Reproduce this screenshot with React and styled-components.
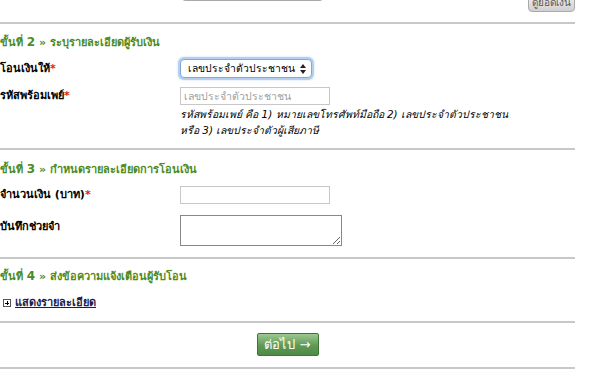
import React from "react";
import styled, { createGlobalStyle } from "styled-components";

const GlobalStyle = createGlobalStyle`
  body {
    margin: 0;
    background: #fff;
    font-family: Tahoma, "DejaVu Sans", "Noto Sans", sans-serif;
    font-size: 11px;
    color: #000;
  }
`;

const Page = styled.div`
  width: 575px;
`;

const Section = styled.div`
  border-bottom: 2px solid #c8c8c8;
  padding: ${(p) => p.pad || "0"};
`;

const TopBar = styled.div`
  height: 22px;
  border-bottom: 2px solid #c8c8c8;
  overflow: hidden;
  display: flex;
  justify-content: space-between;
  align-items: flex-start;
`;

const TopInput = styled.div`
  margin: -19px 0 0 182px;
  width: 139px;
  height: 18px;
  border: 1px solid #aaa;
  border-radius: 3px;
`;

const BalanceButton = styled.div`
  margin-top: -6px;
  height: 16px;
  padding: 0 3px;
  border: 1px solid #aaa;
  border-radius: 4px;
  background: linear-gradient(#f2f2f2, #cfcfcf);
  color: #555;
  font-size: 10px;
  line-height: 16px;
`;

const Heading = styled.div`
  color: #4c8b22;
  font-weight: bold;
  line-height: 14px;
  height: 14px;
  white-space: nowrap;
`;

const StepNo = styled.span`
  font-size: 12px;
`;

const Row = styled.div`
  display: flex;
  align-items: ${(p) => (p.top ? "flex-start" : "center")};
  margin-top: ${(p) => p.gap}px;
`;

const Label = styled.div`
  width: 180px;
  flex: none;
  font-weight: bold;
  line-height: 14px;
  padding-top: ${(p) => p.offset || 0}px;
`;

const Required = styled.span`
  color: #e02020;
`;

const Field = styled.div`
  display: flex;
  flex-direction: column;
`;

const FakeSelect = styled.div`
  width: 132px;
  height: 19px;
  box-sizing: border-box;
  border: 1px solid #7fa7d9;
  border-radius: 4px;
  box-shadow: 0 0 0 2px #b5cff0, 0 0 3px 2px #cfe0f5;
  display: flex;
  align-items: center;
  justify-content: space-between;
  padding: 0 5px 0 7px;
  background: #fff;
  font-size: 10.3px;
  white-space: nowrap;
`;

const TextInput = styled.input`
  width: 150px;
  height: 18px;
  box-sizing: border-box;
  border: 1px solid #c8c8c8;
  padding: 0 3px;
  margin: 0;
  font: inherit;
  font-size: 10.5px;
  &::placeholder {
    color: #a0a0a0;
  }
`;

const TextArea = styled.textarea`
  width: 162px;
  height: 31px;
  box-sizing: border-box;
  border: 1px solid #888;
  margin: 0;
  padding: 2px;
  font: inherit;
`;

const Help = styled.div`
  font-style: italic;
  font-size: 10.4px;
  line-height: 16px;
  margin-top: 1px;
  white-space: nowrap;
`;

const Toggle = styled.div`
  display: flex;
  align-items: center;
  gap: 4px;
  padding-left: 3px;
  line-height: 14px;
`;

const PlusBox = styled.span`
  width: 8px;
  height: 8px;
  border: 1px solid #555;
  position: relative;
  box-sizing: border-box;
  background: #fff;
  &::before,
  &::after {
    content: "";
    position: absolute;
    background: #000;
  }
  &::before {
    left: 1px;
    right: 1px;
    top: 2.5px;
    height: 1px;
  }
  &::after {
    top: 1px;
    bottom: 1px;
    left: 2.5px;
    width: 1px;
  }
`;

const DetailLink = styled.a`
  color: #1b1b4d;
  font-weight: bold;
  text-decoration: underline;
`;

const Actions = styled.div`
  display: flex;
  justify-content: center;
`;

const NextButton = styled.button`
  height: 23px;
  width: 62px;
  margin: 0;
  padding: 0;
  border: 1px solid #3f7438;
  border-radius: 2px;
  background: linear-gradient(#9cc890, #5f9a55 55%, #4d8a45);
  color: #fff;
  font: inherit;
  font-size: 13px;
  cursor: pointer;
`;

const App = () => (
  <Page>
    <GlobalStyle />
    <TopBar>
      <TopInput />
      <BalanceButton>ดูยอดเงิน</BalanceButton>
    </TopBar>

    <Section pad="11px 0 10px">
      <Heading>
        ขั้นที่ <StepNo>2</StepNo> » ระบุรายละเอียดผู้รับเงิน
      </Heading>
      <Row gap={10}>
        <Label>
          โอนเงินให้<Required>*</Required>
        </Label>
        <FakeSelect>
          <span>เลขประจำตัวประชาชน</span>
          <svg width="6" height="10" viewBox="0 0 6 10">
            <path d="M3 0 L6 4 H0 Z M3 10 L0 6 H6 Z" fill="#222" />
          </svg>
        </FakeSelect>
      </Row>
      <Row gap={9} top>
        <Label offset={2}>
          รหัสพร้อมเพย์<Required>*</Required>
        </Label>
        <Field>
          <TextInput placeholder="เลขประจำตัวประชาชน" />
          <Help>
            รหัสพร้อมเพย์ คือ 1) หมายเลขโทรศัพท์มือถือ 2) เลขประจำตัวประชาชน
            <br />
            หรือ 3) เลขประจำตัวผู้เสียภาษี
          </Help>
        </Field>
      </Row>
    </Section>

    <Section pad="12px 0 11px">
      <Heading>
        ขั้นที่ <StepNo>3</StepNo> » กำหนดรายละเอียดการโอนเงิน
      </Heading>
      <Row gap={10}>
        <Label>
          จำนวนเงิน (บาท)<Required>*</Required>
        </Label>
        <TextInput />
      </Row>
      <Row gap={11} top>
        <Label offset={5}>บันทึกช่วยจำ</Label>
        <TextArea />
      </Row>
    </Section>

    <Section pad="10px 0 11px">
      <Heading>
        ขั้นที่ <StepNo>4</StepNo> » ส่งข้อความแจ้งเตือนผู้รับโอน
      </Heading>
      <Row gap={13}>
        <Toggle>
          <PlusBox />
          <DetailLink href="#">แสดงรายละเอียด</DetailLink>
        </Toggle>
      </Row>
    </Section>

    <Section pad="10px 0 11px">
      <Actions>
        <NextButton>ต่อไป →</NextButton>
      </Actions>
    </Section>
  </Page>
);

export default App;
